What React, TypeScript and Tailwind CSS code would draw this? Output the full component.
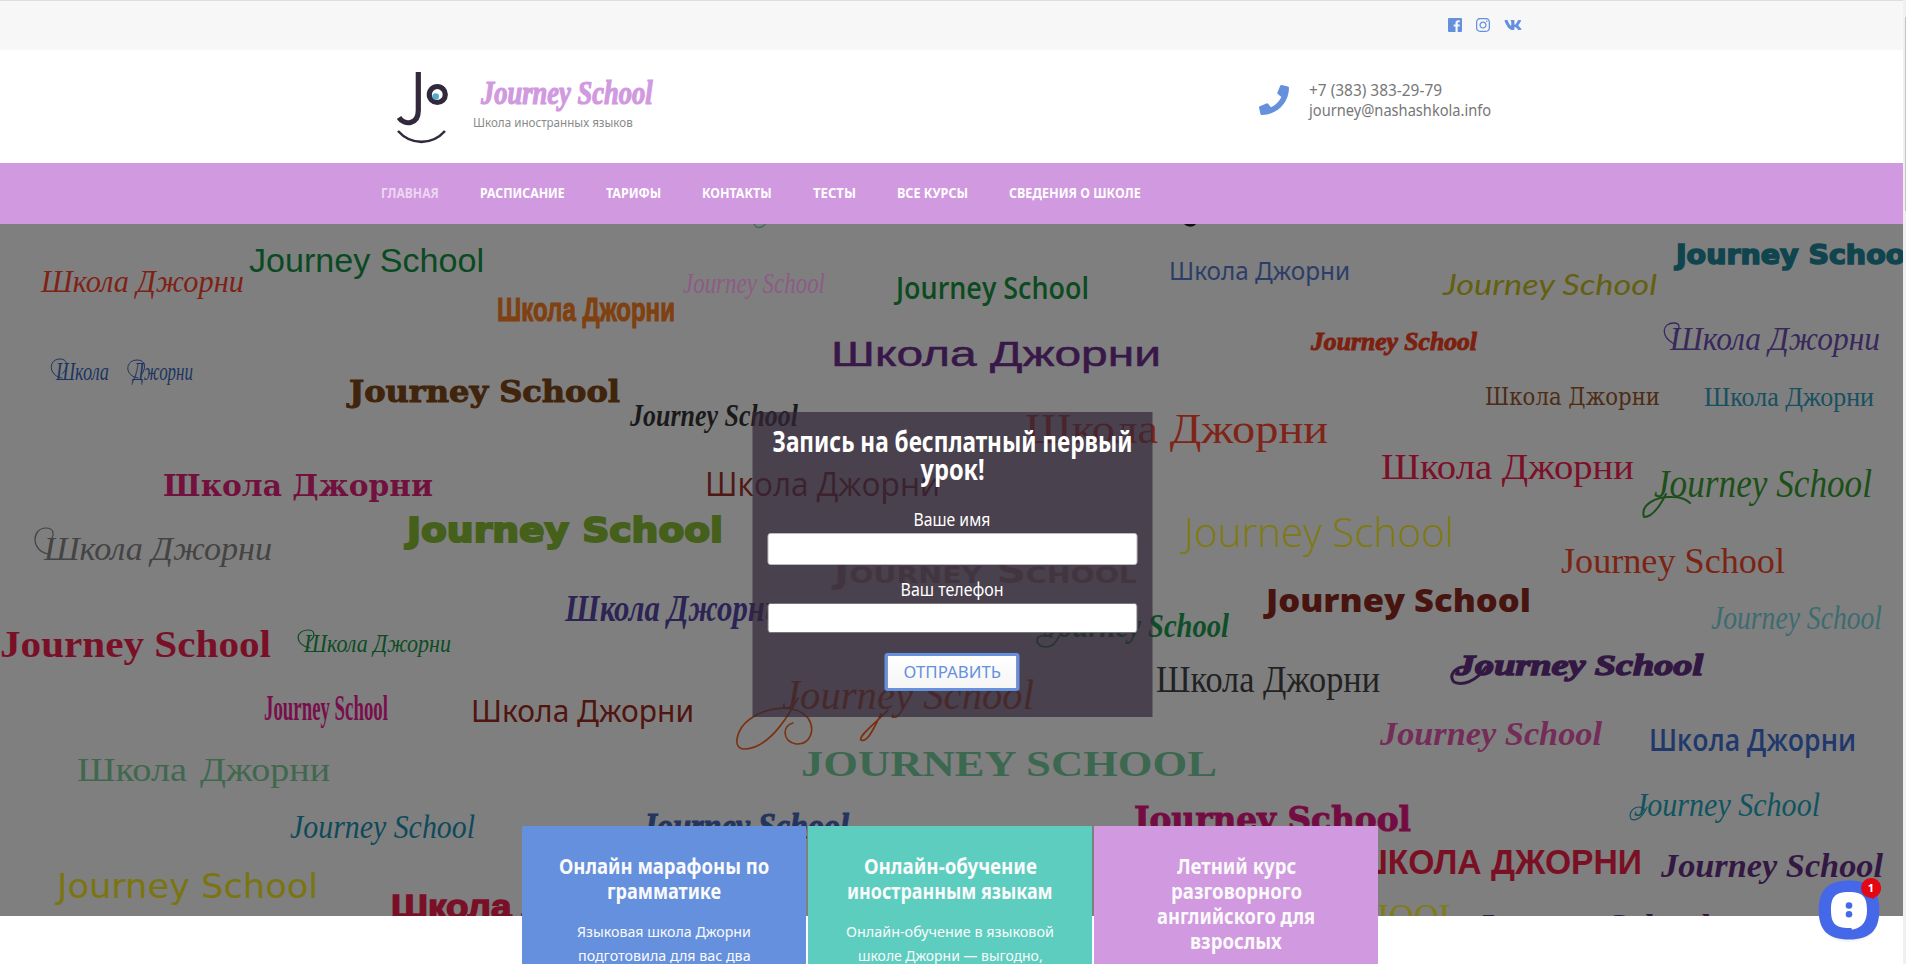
import { useLayoutEffect, useRef, useState, type ReactNode } from "react";
import { FaInstagram, FaPhone, FaVk } from "react-icons/fa";

const SANS = '"Liberation Sans", sans-serif';
const NOTO = '"Noto Sans", sans-serif';
const OPEN = '"Open Sans", sans-serif';
const DEJA = '"DejaVu Sans", sans-serif';
const DSERIF = '"DejaVu Serif", serif';
const SERIF = '"Liberation Serif", serif';

const RU = "Школа Джорни";
const EN = "Journey School";

type Word = {
  t: string;
  x: number;
  end: number;
  y: number;
  size: number;
  c: string;
  f: string;
  w?: number;
  i?: boolean;
  s?: number;
  caps?: boolean;
};

// Positions are page pixels; the drawing's viewBox starts at y = 224.
const words: Word[] = [
  { t: RU, x: 41, end: 244, y: 292, size: 31, c: "#7f2216", f: SERIF, i: true },
  { t: EN, x: 249, end: 484, y: 272, size: 34, c: "#0a4a22", f: SANS },
  { t: RU, x: 497, end: 675, y: 321, size: 34, c: "#804010", f: SANS, w: 700, s: 1 },
  { t: "Школа", x: 56, end: 109, y: 380, size: 26, c: "#1c3560", f: SERIF, i: true },
  { t: "Джорни", x: 133, end: 193, y: 380, size: 26, c: "#1c3560", f: SERIF, i: true },
  { t: EN, x: 349, end: 620, y: 402, size: 30, c: "#40240c", f: DSERIF, w: 700, s: 1 },
  { t: RU, x: 163, end: 433, y: 496, size: 30, c: "#72103e", f: DSERIF, w: 700 },
  { t: EN, x: 407, end: 723, y: 542, size: 34, c: "#45601a", f: DEJA, w: 700, s: 2 },
  { t: RU, x: 44, end: 272, y: 560, size: 33, c: "#444444", f: SERIF, i: true },
  { t: EN, x: 683, end: 825, y: 293, size: 30, c: "#8c5c84", f: SERIF, i: true },
  { t: EN, x: 896, end: 1089, y: 299, size: 30, c: "#0c4a20", f: OPEN, w: 600 },
  { t: RU, x: 1169, end: 1350, y: 280, size: 26, c: "#2c3e68", f: NOTO },
  { t: RU, x: 831, end: 1161, y: 366, size: 35, c: "#381848", f: SANS, s: 0.5 },
  { t: EN, x: 630, end: 798, y: 426, size: 31, c: "#1a1a1a", f: SERIF, w: 700, i: true },
  { t: RU, x: 1025, end: 1328, y: 443, size: 43, c: "#802418", f: SERIF },
  { t: RU, x: 705, end: 940, y: 496, size: 33, c: "#501814", f: OPEN, w: 400 },
  { t: EN, x: 1184, end: 1454, y: 547, size: 41, c: "#7e7a10", f: OPEN, w: 300 },
  { t: EN, x: 1676, end: 1915, y: 264, size: 26, c: "#10444e", f: DEJA, w: 700, s: 1.5 },
  { t: EN, x: 1443, end: 1657, y: 295, size: 28, c: "#646010", f: '"Lato", sans-serif', i: true },
  { t: EN, x: 1311, end: 1477, y: 350, size: 26, c: "#7c2010", f: SERIF, w: 700, i: true, s: 1 },
  { t: RU, x: 1670, end: 1880, y: 350, size: 34, c: "#38285c", f: SERIF, i: true },
  { t: RU, x: 1485, end: 1660, y: 405, size: 25, c: "#4c2c14", f: DSERIF },
  { t: RU, x: 1704, end: 1874, y: 406, size: 28, c: "#185060", f: SERIF },
  { t: RU, x: 1381, end: 1634, y: 479, size: 36, c: "#7c1028", f: SERIF },
  { t: EN, x: 1654, end: 1872, y: 497, size: 40, c: "#1c5018", f: SERIF, i: true },
  { t: EN, x: 1561, end: 1785, y: 573, size: 36, c: "#7c2414", f: SERIF },
  { t: EN, x: 1266, end: 1531, y: 612, size: 31, c: "#481410", f: OPEN, w: 800 },
  { t: EN, x: 1711, end: 1882, y: 629, size: 34, c: "#3c6c70", f: SERIF, i: true },
  { t: EN, x: 1456, end: 1703, y: 675, size: 30, c: "#341844", f: SERIF, w: 700, i: true, s: 1.5 },
  { t: RU, x: 1156, end: 1380, y: 692, size: 37, c: "#222222", f: SERIF },
  { t: EN, x: 1380, end: 1602, y: 745, size: 34, c: "#742c58", f: SERIF, w: 700, i: true },
  { t: RU, x: 1649, end: 1856, y: 751, size: 31, c: "#20386c", f: OPEN, w: 600 },
  { t: EN, x: 1634, end: 1820, y: 816, size: 33, c: "#105460", f: SERIF, i: true },
  { t: EN, x: 1134, end: 1411, y: 831, size: 34, c: "#740c44", f: DSERIF, w: 700, s: 1 },
  { t: "ШКОЛА ДЖОРНИ", x: 1354, end: 1642, y: 874, size: 35, c: "#7a1024", f: SANS, w: 700 },
  { t: EN, x: 1661, end: 1883, y: 877, size: 34, c: "#341844", f: SERIF, w: 700, i: true },
  { t: "JOURNEY SCHOOL", x: 1156, end: 1460, y: 930, size: 37, c: "#807c18", f: SERIF },
  { t: EN, x: 1475, end: 1709, y: 936, size: 31, c: "#341844", f: SERIF, w: 700, i: true },
  { t: EN, x: 0, end: 271, y: 657, size: 38, c: "#7a1028", f: SERIF, w: 700 },
  { t: RU, x: 304, end: 451, y: 652, size: 25, c: "#0c4c24", f: SERIF, i: true },
  { t: EN, x: 264, end: 388, y: 720, size: 35, c: "#780f4c", f: SERIF, w: 700 },
  { t: RU, x: 471, end: 694, y: 722, size: 31, c: "#501510", f: NOTO },
  { t: "Школа", x: 77, end: 187, y: 781, size: 34, c: "#40684f", f: SERIF },
  { t: "Джорни", x: 200, end: 330, y: 781, size: 34, c: "#40684f", f: SERIF },
  { t: EN, x: 290, end: 475, y: 838, size: 33, c: "#0f4a5a", f: SERIF, i: true },
  { t: EN, x: 57, end: 318, y: 898, size: 33, c: "#7a7510", f: DEJA },
  { t: RU, x: 391, end: 663, y: 918, size: 34, c: "#7a1028", f: SANS, w: 700, s: 1.5 },
  { t: RU, x: 565, end: 782, y: 621, size: 37, c: "#2c2454", f: SERIF, w: 700, i: true },
  { t: EN, x: 834, end: 1137, y: 583, size: 33, c: "#6b5850", f: DEJA, w: 700, caps: true },
  { t: EN, x: 1044, end: 1229, y: 637, size: 33, c: "#0f4f28", f: SERIF, w: 700, i: true },
  { t: EN, x: 782, end: 1034, y: 709, size: 42, c: "#7c3010", f: SERIF, i: true },
  { t: "JOURNEY SCHOOL", x: 801, end: 1217, y: 776, size: 36, c: "#3c6850", f: SERIF, w: 700 },
  { t: EN, x: 641, end: 849, y: 838, size: 35, c: "#24355f", f: SERIF, w: 700, i: true, s: 1 },
];

function WordCloud() {
  return (
    <svg
      className="absolute inset-0"
      width="1903"
      height="692"
      viewBox="0 224 1903 692"
      aria-hidden="true"
    >
      {words.map((w, k) => (
        <text
          key={k}
          x={w.x}
          y={w.y}
          fontFamily={w.f}
          fontSize={w.size}
          fontWeight={w.w ?? 400}
          fontStyle={w.i ? "italic" : "normal"}
          fontVariant={w.caps ? "small-caps" : "normal"}
          fill={w.c}
          stroke={w.s ? w.c : "none"}
          strokeWidth={w.s ?? 0}
          textLength={w.end - w.x}
          lengthAdjust="spacingAndGlyphs"
        >
          {w.t}
        </text>
      ))}
      {/* long swashes of the script capitals */}
      <g fill="none" strokeLinecap="round">
        <path d="M754 223c1 6 8 6 12 0" stroke="#3c6c60" strokeWidth="1.3" />
        <path d="M1185 223c3 3 8 3 10 0" stroke="#111111" strokeWidth="3" />
        <path
          d="M798 698c-16 30-35 51-54 51c-12 0-8-20 6-30c16-12 45-16 58-1c8 12 2 27-12 26c-14-2-14-19-3-21"
          stroke="#7c3010"
          strokeWidth="1.6"
        />
        <path d="M888 710c-9 10-30 26-27 30c6 3 12-10 20-26" stroke="#7c3010" strokeWidth="1.8" />
        <path
          d="M1666 494c-6 12-14 23-22 23c-4-12 12-21 28-20c8 0 14 2 18 6"
          stroke="#1c5018"
          strokeWidth="2"
        />
        <path d="M1466 667c-10-1-18 8-12 15c8 4 22 0 32-15" stroke="#341844" strokeWidth="3" />
        <path d="M1645 810c-8-8-18 2-14 9c6 3 12-3 16-12" stroke="#105460" strokeWidth="1.2" />
        <path d="M62 378c-14-2-14-19-2-19c9 0 8 10 2 15" stroke="#1c3560" strokeWidth="1" />
        <path d="M138 378c-14-2-13-18-1-18c9 0 9 8 5 14" stroke="#1c3560" strokeWidth="1" />
        <path d="M48 554c-18-4-16-26-2-26c8 0 8 6 6 10" stroke="#444444" strokeWidth="1.2" />
        <path d="M1674 344c-14-8-12-21 0-21c7 0 6 7 1 10" stroke="#38285c" strokeWidth="1.3" />
        <path d="M310 648c-16-3-15-18-2-18c8 0 7 7 2 11" stroke="#0c4c24" strokeWidth="1.2" />
        <path d="M1052 637c-20-6-18 10-6 10c8 0 10-6 14-12" stroke="#0f4f28" strokeWidth="1.6" />
      </g>
    </svg>
  );
}

/** Stretches one line of text to the width of its own box. */
function Line({ className, children }: { className: string; children: ReactNode }) {
  const box = useRef<HTMLSpanElement>(null);
  const text = useRef<HTMLSpanElement>(null);
  const [scale, setScale] = useState(1);
  useLayoutEffect(() => {
    if (box.current && text.current) {
      setScale(box.current.clientWidth / text.current.offsetWidth);
    }
  }, []);
  return (
    <span ref={box} className={`block whitespace-nowrap text-left ${className}`}>
      <span
        ref={text}
        className="inline-block origin-left"
        style={{ transform: `scaleX(${scale})` }}
      >
        {children}
      </span>
    </span>
  );
}

const nav = [
  { label: "ГЛАВНАЯ", width: "w-[58px]", active: true },
  { label: "РАСПИСАНИЕ", width: "w-[85px]" },
  { label: "ТАРИФЫ", width: "w-[55px]" },
  { label: "КОНТАКТЫ", width: "w-[70px]" },
  { label: "ТЕСТЫ", width: "w-[43px]" },
  { label: "ВСЕ КУРСЫ", width: "w-[71px]" },
  { label: "СВЕДЕНИЯ О ШКОЛЕ", width: "w-[132px]" },
];

const cards = [
  {
    bg: "bg-[#6590de]",
    title: [
      ["Онлайн марафоны по", "w-[210px]"],
      ["грамматике", "w-[114px]"],
    ],
    body: [
      ["Языковая школа Джорни", "w-[174px]"],
      ["подготовила для вас два", "w-[173px]"],
    ],
  },
  {
    bg: "bg-[#5dcdc0]",
    title: [
      ["Онлайн-обучение", "w-[173px]"],
      ["иностранным языкам", "w-[206px]"],
    ],
    body: [
      ["Онлайн-обучение в языковой", "w-[208px]"],
      ["школе Джорни — выгодно,", "w-[185px]"],
    ],
  },
  {
    bg: "bg-[#d199df]",
    title: [
      ["Летний курс", "w-[119px]"],
      ["разговорного", "w-[131px]"],
      ["английского для", "w-[158px]"],
      ["взрослых", "w-[92px]"],
    ],
    body: [],
  },
];

function Logo() {
  return (
    <svg width="52" height="76" viewBox="396 70 52 76" fill="none" stroke="#322a3c">
      <path d="M418.3 72v38.500c0 14-14 15.500-19.300 7" strokeWidth="5.200" />
      <circle cx="437.300" cy="94.500" r="8" strokeWidth="5.200" />
      <circle cx="435.700" cy="96.500" r="3.300" fill="#55a9cb" stroke="none" />
      <path d="M398 131c13 14.500 34 14.500 47 0" strokeWidth="2.600" />
    </svg>
  );
}

function Header() {
  return (
    <header>
      <div className="flex h-[50px] items-start border-t border-[#dedede] bg-[#f7f7f7] pl-[1448px] text-[#6590de]">
        <div className="flex items-center gap-[14px] pt-[15px]">
          <svg width="14" height="14" viewBox="0 0 14 14" fill="currentColor">
            <path d="M1 0h12a1 1 0 0 1 1 1v12a1 1 0 0 1-1 1h-3.300V8.600h1.800l.3-2.100H9.700V5.200c0-.6.2-1 1-1h1.100V2.300c-.2 0-.9-.1-1.600-.1-1.600 0-2.700 1-2.700 2.800v1.500H5.700v2.100h1.800V14H1a1 1 0 0 1-1-1V1a1 1 0 0 1 1-1z" />
          </svg>
          <FaInstagram className="h-4 w-[14px]" />
          <FaVk className="h-[18px] w-[18px]" />
        </div>
      </div>
      <div className="flex h-[113px] bg-white pl-[396px]">
        <div className="pt-5">
          <Logo />
        </div>
        <div className="ml-[25px] w-[190px] pt-[25px]">
          <div className="pl-[8px] font-['Liberation_Serif',serif] text-[33px] leading-[36px] font-bold text-[#d199df] italic [-webkit-text-stroke:1.2px_#d199df]">
            <Line className="w-[172px]">Journey School</Line>
          </div>
          <div className="mt-[2px] text-[13px] leading-[18px] text-[#8a8a8a]">
            <Line className="w-[160px]">Школа иностранных языков</Line>
          </div>
        </div>
        <div className="ml-auto flex w-[644px] items-start">
          <FaPhone className="mt-[35px] h-[30px] w-[30px] text-[#6590de]" />
          <div className="ml-5 pt-[30px] text-base leading-5 text-[#777777]">
            <Line className="w-[133px]">+7 (383) 383-29-79</Line>
            <Line className="w-[182px]">journey@nashashkola.info</Line>
          </div>
        </div>
      </div>
      <nav className="flex h-[61px] items-center gap-[41px] bg-[#d199df] pb-px pl-[381px] text-sm font-bold text-white">
        {nav.map((n) => (
          <a key={n.label} className={n.active ? "text-[#edd6f2]" : ""}>
            <Line className={n.width}>{n.label}</Line>
          </a>
        ))}
      </nav>
    </header>
  );
}

function SignupForm() {
  return (
    <form className="relative mx-auto flex h-[305px] w-[400px] translate-x-[0.5px] flex-col items-center bg-[rgba(50,38,55,0.7)] text-white">
      <h2 className="flex flex-col items-center pt-[15px] text-[28px] leading-7 font-bold">
        <Line className="w-[360px]">Запись на бесплатный первый</Line>
        <Line className="w-[64px]">урок!</Line>
      </h2>
      <label className="mt-[24px] text-lg leading-6">
        <Line className="w-[77px]">Ваше имя</Line>
      </label>
      <div className="mt-[2px] h-8 w-[370px] rounded-[3px] border border-[#bbbbbb] bg-white" />
      <label className="mt-[12px] text-lg leading-6">
        <Line className="w-[103px]">Ваш телефон</Line>
      </label>
      <div className="mt-[2px] h-[30px] w-[370px] rounded-[3px] border border-[#767676] bg-white" />
      <button
        type="button"
        className="mt-5 flex h-[38px] w-[135px] items-center justify-center rounded-[3px] border-[3px] border-[#6590de] bg-linear-to-b from-white to-[#f5f5f5] text-[17px] text-[#6590de]"
      >
        <Line className="w-[97px]">ОТПРАВИТЬ</Line>
      </button>
    </form>
  );
}

function ChatButton() {
  return (
    <svg className="absolute top-[872px] left-[1810px]" width="80" height="80" viewBox="1810 872 80 80">
      <path
        d="M1849 883c24 0 30 10 30 29s-8 30-30 30s-30-11-30-30s6-29 30-29z"
        fill="#000000"
        opacity="0.040"
      />
      <path
        d="M1849 880.500c21 0 30.300 9 30.300 29.500s-9.300 29.500-30.300 29.500s-30.300-9-30.300-29.500s9.300-29.500 30.300-29.500z"
        fill="#4468e8"
      />
      <path
        d="M1849 892c14 0 18 5 18 18c0 11-4 17-14 19.500c-1 .3-1.500 0-1.500-1.500c-16 .5-20.500-4-20.500-18c0-13 4-18 18-18z"
        fill="#ffffff"
      />
      <circle cx="1849" cy="905.500" r="3.300" fill="#4468e8" />
      <circle cx="1849" cy="914.300" r="3.300" fill="#4468e8" />
      <path d="M1871 878a10 10 0 0 1 3.500 19.400l-.5 1.600l-3-1a10 10 0 0 1 0-20z" fill="#e30613" />
      <text
        x="1871"
        y="892"
        textAnchor="middle"
        fontFamily='"Noto Sans", sans-serif'
        fontSize="11"
        fontWeight="700"
        fill="#ffffff"
      >
        1
      </text>
    </svg>
  );
}

export default function App() {
  return (
    <div className="relative flex h-[964px] w-[1906px] overflow-hidden bg-white font-['Noto_Sans',sans-serif]">
      <div className="w-[1903px] shrink-0">
        <Header />
        <section className="relative h-[692px] overflow-hidden bg-[#7f7f7f] pt-[188px]">
          <WordCloud />
          <SignupForm />
        </section>
        <section className="relative -mt-[90px] flex gap-[2px] pl-[522px]">
          {cards.map((c) => (
            <article
              key={c.bg}
              className={`flex h-[320px] w-[284px] flex-col items-center pt-[27px] text-[#fafafa] ${c.bg}`}
            >
              <h3 className="flex flex-col items-center text-[22px] leading-[25px] font-bold">
                {c.title.map(([t, w]) => (
                  <Line key={t} className={w}>
                    {t}
                  </Line>
                ))}
              </h3>
              <p className="mt-4 flex flex-col items-center text-[15px] leading-6">
                {c.body.map(([t, w]) => (
                  <Line key={t} className={w}>
                    {t}
                  </Line>
                ))}
              </p>
            </article>
          ))}
        </section>
      </div>
      <div className="flex w-[3px] justify-end bg-[#f0f0f0]">
        <div className="mt-[17px] h-[194px] w-px bg-[#c4c4c4]" />
      </div>
      <ChatButton />
    </div>
  );
}
